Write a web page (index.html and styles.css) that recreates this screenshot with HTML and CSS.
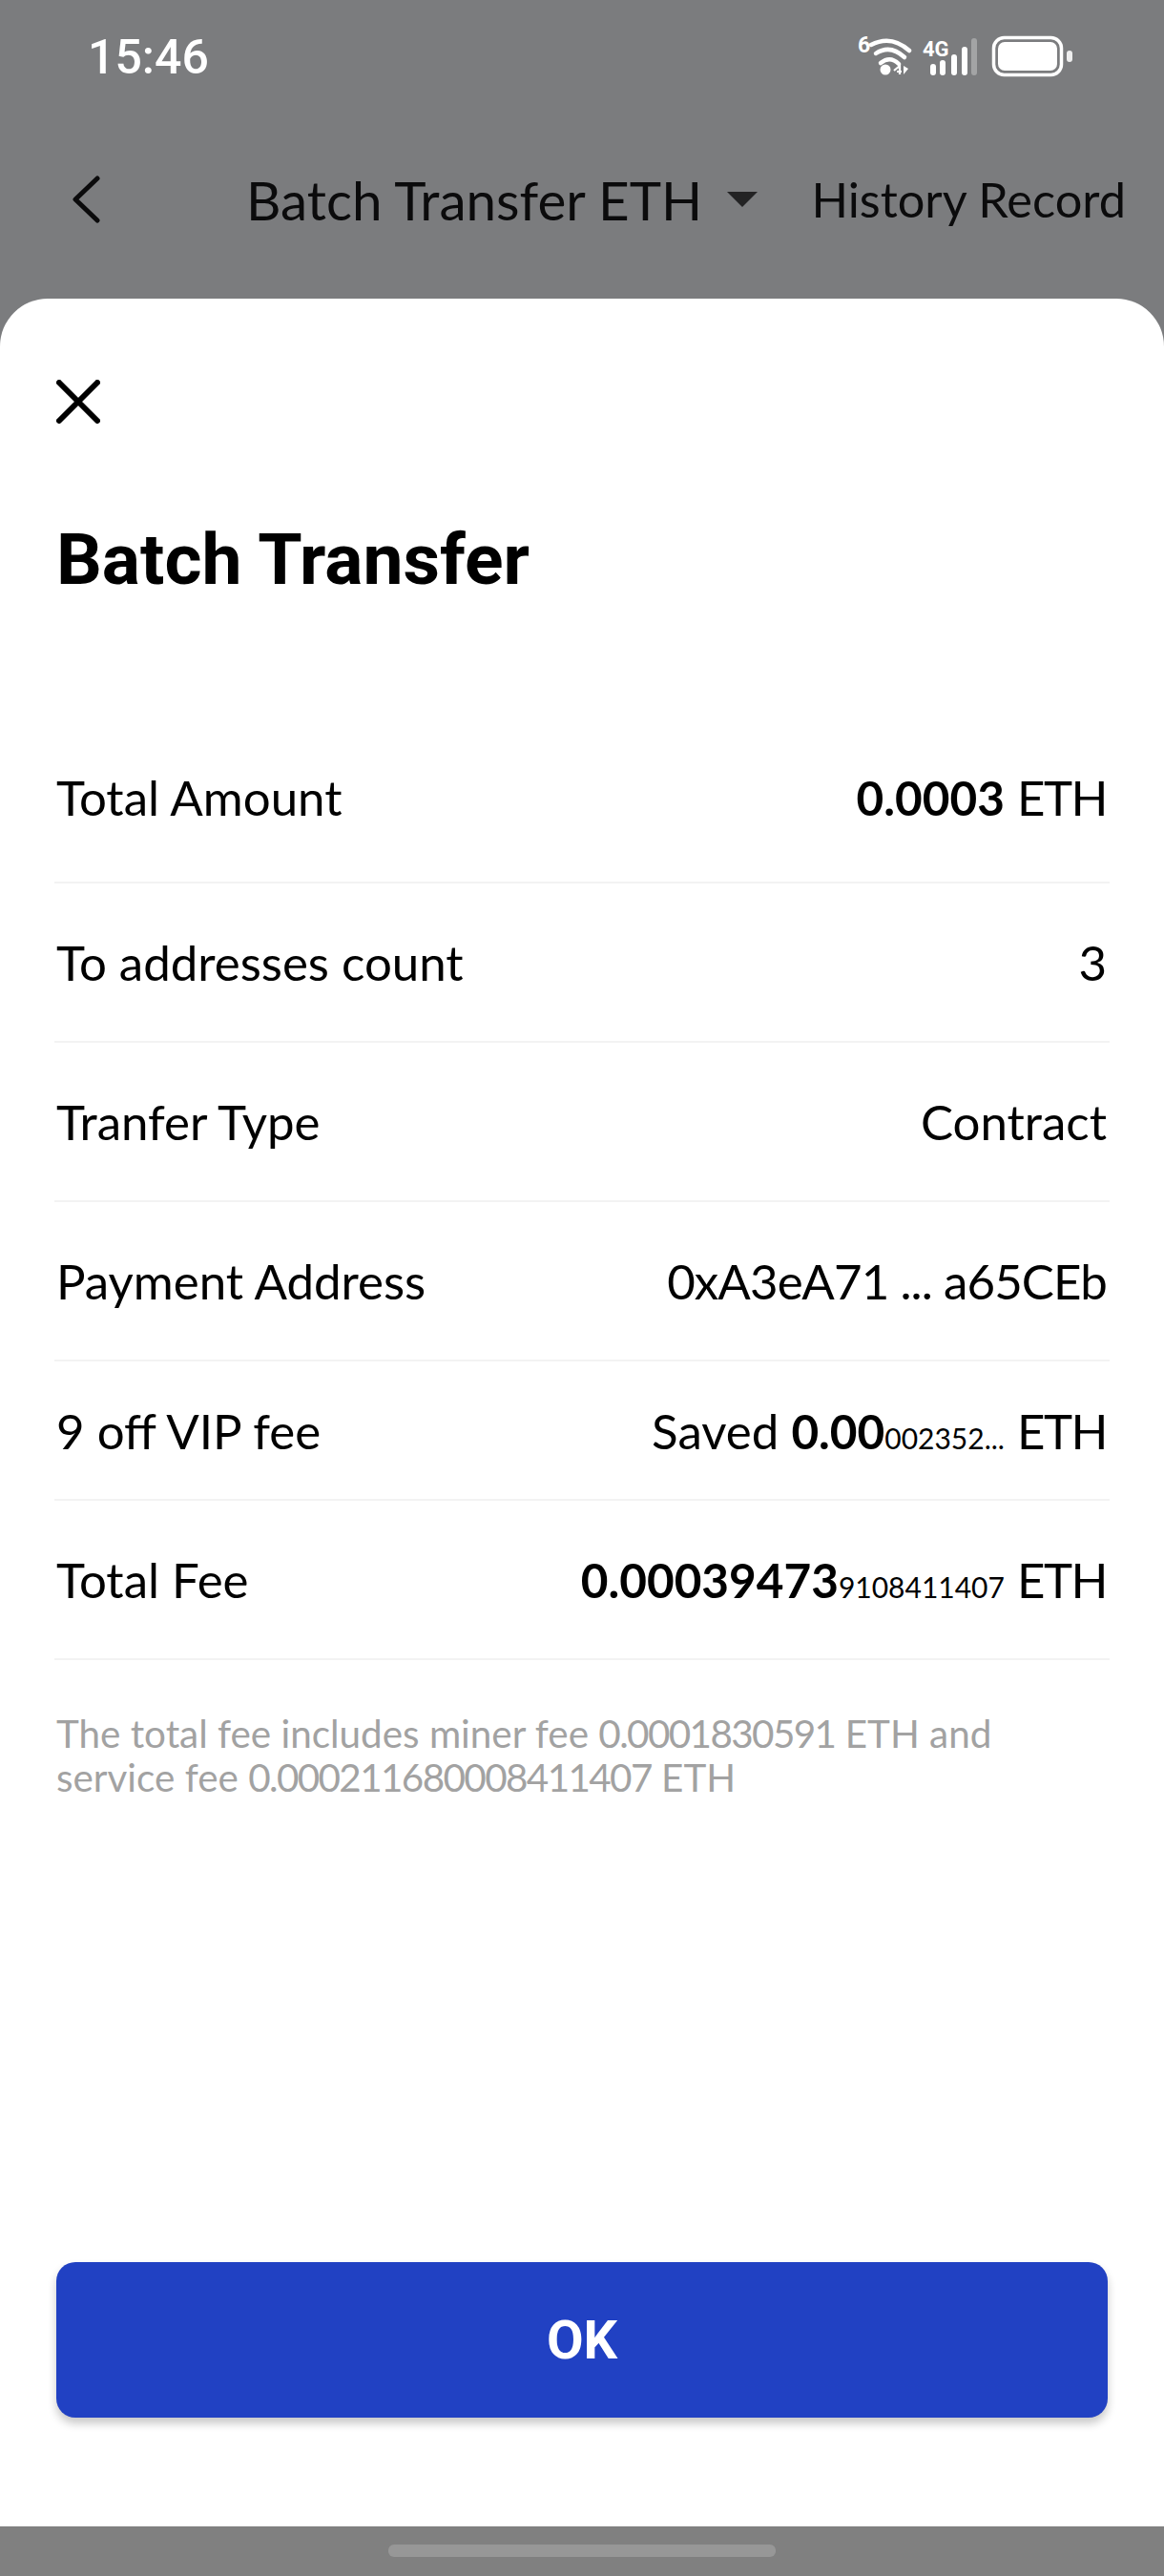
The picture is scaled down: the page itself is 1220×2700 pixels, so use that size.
FILE: index.html
```html
<!DOCTYPE html>
<html lang="en">
<head>
    <meta charset="UTF-8">
    <meta name="viewport" content="width=device-width, initial-scale=1.0">
    <title>Batch Transfer</title>
    <link rel="stylesheet" href="styles.css">
</head>
<body>

<!-- Status bar -->
<div class="status-bar">
    <span class="status-time">15:46</span>
    <svg class="status-icons" width="236" height="50" viewBox="891 34 236 50" fill="none">
        <text x="899" y="55" class="status-small" font-size="23">6</text>
        <path d="M913 47 Q934 36 953 53" stroke="#fff" stroke-width="4.5" stroke-linecap="round"/>
        <path d="M918 56 Q933 46 948 60" stroke="#fff" stroke-width="4.5" stroke-linecap="round"/>
        <path d="M923 66 Q933 58 942 67" stroke="#fff" stroke-width="4.5" stroke-linecap="round"/>
        <circle cx="928" cy="73" r="5.5" fill="#fff"/>
        <path d="M937 74 L943 69 L943 78 M940 75 H945" stroke="#fff" stroke-width="2.2"/>
        <path d="M947 69 V78 L952 72 Z" fill="#fff"/>
        <text x="967" y="59" class="status-small" font-size="22">4G</text>
        <rect x="975" y="67" width="6" height="12" rx="3" fill="#fff"/>
        <rect x="985" y="63" width="6" height="16" rx="3" fill="#fff"/>
        <rect x="997" y="57" width="6" height="22" rx="3" fill="#fff"/>
        <rect x="1008" y="49" width="6" height="30" rx="3" fill="#fff"/>
        <rect x="1018" y="40" width="6" height="39" rx="3" fill="#a3a4a5"/>
        <rect x="1041.5" y="39.5" width="71" height="39" rx="11" stroke="#fff" stroke-width="3.5"/>
        <rect x="1046" y="44" width="62" height="30" rx="7" fill="#fff"/>
        <rect x="1118" y="53" width="6" height="12" rx="3" fill="#eee"/>
    </svg>
</div>

<!-- Navigation behind the sheet -->
<div class="nav">
    <svg class="nav-back" width="30" height="50" viewBox="0 0 30 50" fill="none">
        <path d="M27 3 L4 25 L27 47" stroke="#0b0b0c" stroke-width="5" stroke-linecap="round" stroke-linejoin="round"/>
    </svg>
    <span class="nav-title">Batch Transfer ETH</span>
    <span class="nav-caret"></span>
    <span class="nav-history">History Record</span>
</div>

<!-- Confirm sheet -->
<div class="sheet">
    <svg class="sheet-close" width="46" height="46" viewBox="0 0 46 46" fill="none">
        <path d="M3 3 L43 43 M43 3 L3 43" stroke="#000" stroke-width="6" stroke-linecap="round"/>
    </svg>
    <h1 class="sheet-title">Batch Transfer</h1>

    <div class="rows">
        <div class="row row-first">
            <span>Total Amount</span>
            <span><b>0.0003</b> <span class="unit">ETH</span></span>
        </div>
        <div class="row">
            <span>To addresses count</span>
            <span>3</span>
        </div>
        <div class="row">
            <span>Tranfer Type</span>
            <span>Contract</span>
        </div>
        <div class="row">
            <span>Payment Address</span>
            <span class="addr">0xA3eA71 ... a65CEb</span>
        </div>
        <div class="row row-short">
            <span>9 off VIP fee</span>
            <span>Saved <b>0.00</b><small>002352...</small> <span class="unit">ETH</span></span>
        </div>
        <div class="row">
            <span>Total Fee</span>
            <span><b>0.00039473</b><small>9108411407</small> <span class="unit">ETH</span></span>
        </div>
    </div>

    <p class="note">The total fee includes miner fee <span class="num">0.0001830591</span> ETH and<br>service fee <span class="num">0.000211680008411407</span> ETH</p>

    <button class="btn-ok">OK</button>
</div>

<!-- Home bar -->
<div class="home-bar">
    <div class="home-pill"></div>
</div>

</body>
</html>
```

FILE: styles.css
```css
* {
    box-sizing: border-box;
}

body {
    margin: 0;
    width: 1220px;
    height: 2700px;
    overflow: hidden;
    background-color: #7b7c7e;
    font-family: 'Lato', sans-serif;
    color: #000;
}

.status-bar {
    height: 114px;
    padding: 34px 93px 0 92px;
    display: flex;
    justify-content: space-between;
    align-items: flex-start;
}

.status-time {
    margin-top: 2px;
    font-family: 'Roboto', sans-serif;
    font-size: 50px;
    font-weight: 500;
    line-height: 48px;
    color: #fff;
}

.status-small {
    font-family: 'Roboto', sans-serif;
    font-weight: 700;
    fill: #fff;
}

.nav {
    height: 199px;
    padding: 0 40px 10px 75px;
    display: flex;
    align-items: center;
    color: #0b0b0c;
}

.nav-back {
    flex-shrink: 0;
}

.nav-title {
    margin-left: 153px;
    font-size: 56.5px;
}

.nav-caret {
    margin-left: 26px;
    border-left: 16px solid transparent;
    border-right: 16px solid transparent;
    border-top: 16px solid #232324;
}

.nav-history {
    margin-left: auto;
    font-size: 50.5px;
}

.sheet {
    height: 2335px;
    padding: 85px 59px 114px;
    display: flex;
    flex-direction: column;
    background-color: #fff;
    border-radius: 50px 50px 0 0;
}

.sheet-close {
    display: block;
}

.sheet-title {
    margin: 97px 0 0;
    font-family: 'Roboto', sans-serif;
    font-size: 75px;
    line-height: 90px;
    font-weight: 700;
}

.rows {
    margin-top: 128px;
}

.row {
    height: 167px;
    margin: 0 -2px;
    padding: 0 3px 0 2px;
    display: flex;
    justify-content: space-between;
    align-items: center;
    font-size: 51px;
    border-bottom: 2px solid #f3f3f3;
}

.row-first {
    padding-bottom: 12px;
}

.row-short {
    height: 146px;
}

.row b {
    font-size: 49.5px;
    font-weight: 700;
}

.row small {
    font-size: 30px;
}

.unit {
    letter-spacing: -1.5px;
}

.addr {
    letter-spacing: -0.9px;
}

.note {
    margin: 54px 0 0;
    font-size: 40.4px;
    line-height: 46px;
    color: #a2a2a2;
}

.num {
    letter-spacing: -1.6px;
}

.btn-ok {
    margin-top: auto;
    height: 163px;
    border: none;
    border-radius: 20px;
    background-color: #2141c3;
    color: #fff;
    font-family: 'Roboto', sans-serif;
    font-size: 56px;
    font-weight: 700;
    box-shadow: 0 6px 10px rgba(0, 0, 0, 0.22);
}

.home-bar {
    height: 52px;
    padding-top: 19px;
    background-color: #808080;
}

.home-pill {
    width: 406px;
    height: 13px;
    margin: 0 auto;
    border-radius: 6px;
    background-color: #979797;
}
```
